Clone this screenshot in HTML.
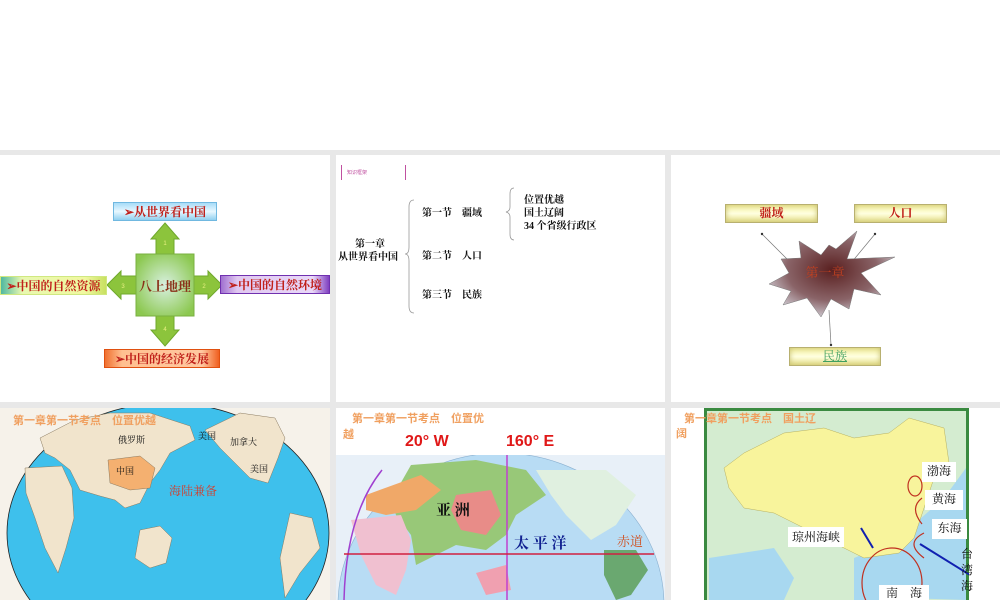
<!DOCTYPE html>
<html><head><meta charset="utf-8">
<style>
*{margin:0;padding:0;box-sizing:border-box}
html,body{width:1000px;height:600px;overflow:hidden}
body{background:#fff;position:relative;font-family:"Liberation Sans","Noto Sans CJK SC",sans-serif}
.a{position:absolute}
.g{position:absolute;background:#e8e8e8}
.lbl{position:absolute;font-family:"Liberation Serif","Noto Serif CJK SC",serif;font-weight:bold;font-size:12px;color:#c0201a;text-align:center;white-space:nowrap;line-height:1}
.t{position:absolute;font-family:"Liberation Serif","Noto Serif CJK SC",serif;font-size:10px;color:#111;white-space:nowrap;line-height:1;font-weight:bold}
.ybox{position:absolute;height:19px;border:1px solid #b8b070;background:linear-gradient(#f4f0a0,#ffffe0 50%,#e8e290);box-shadow:inset 0 0 6px #c8c070}
.og{position:absolute;color:#f0a060;font-size:11px;font-weight:bold;white-space:nowrap;line-height:1;font-family:"Liberation Sans","Noto Sans CJK SC",sans-serif}
</style></head><body>
<div class="g" style="left:0;top:150px;width:1000px;height:5px"></div>
<div class="g" style="left:0;top:402px;width:1000px;height:6px"></div>
<div class="g" style="left:330px;top:150px;width:6px;height:450px"></div>
<div class="g" style="left:665px;top:150px;width:6px;height:450px"></div>

<!-- Panel 1 -->
<svg class="a" style="left:0;top:155px" width="330" height="247">
<defs><radialGradient id="cg" cx="0.5" cy="0.5" r="0.6"><stop offset="0" stop-color="#d8f0e0"/><stop offset="1" stop-color="#8cc850"/></radialGradient></defs>
<g fill="#8cc43c" stroke="#6fa82c" stroke-width="1">
<polygon points="165,68 179,84 174,84 174,99 156,99 156,84 151,84"/>
<polygon points="165,191 179,175 174,175 174,161 156,161 156,175 151,175"/>
<polygon points="107,130 121,116 121,121 136,121 136,139 121,139 121,144"/>
<polygon points="222,130 208,116 208,121 194,121 194,139 208,139 208,144"/>
</g>
<rect x="136" y="99" width="58" height="62" fill="url(#cg)" stroke="#7ab040"/>
<text x="165" y="90" font-size="6" fill="#e8f080" text-anchor="middle">1</text>
<text x="204" y="133" font-size="6" fill="#e8f080" text-anchor="middle">2</text>
<text x="123" y="133" font-size="6" fill="#e8f080" text-anchor="middle">3</text>
<text x="165" y="176" font-size="6" fill="#e8f080" text-anchor="middle">4</text>
</svg>
<div class="lbl" style="left:136px;top:280px;width:58px;font-size:13px;color:#8a3018">八上地理</div>
<div class="lbl" style="left:113px;top:202px;width:104px;height:19px;padding-top:3px;background:linear-gradient(#a8dcf8,#e8f8ff 50%,#90d0f0);border:1px solid #70b8e0">➢从世界看中国</div>
<div class="lbl" style="left:0;top:276px;width:107px;height:19px;padding-top:3px;background:linear-gradient(90deg,#50b8a0,#e8f8b0 20%,#f0f8a0 80%,#c8e060);border:1px solid #d0e880">➢中国的自然资源</div>
<div class="lbl" style="left:220px;top:275px;width:110px;height:19px;padding-top:3px;background:linear-gradient(90deg,#a070d0,#e0c8f0 15%,#e8d8f8 85%,#8040c0);border:1px solid #7030b0">➢中国的自然环境</div>
<div class="lbl" style="left:104px;top:349px;width:116px;height:19px;padding-top:3px;background:linear-gradient(90deg,#f07030,#ffc090 15%,#ffc8a0 85%,#f06020);border:1px solid #e05010">➢中国的经济发展</div>

<!-- Panel 2 -->
<div class="a" style="left:341px;top:165px;width:1px;height:15px;background:#c050a0"></div>
<div class="a" style="left:405px;top:165px;width:1px;height:15px;background:#c050a0"></div>
<div class="a" style="left:347px;top:169px;font-size:5px;color:#c050a0">知识框架</div>
<div class="t" style="left:355px;top:240px">第一章</div>
<div class="t" style="left:338px;top:253px">从世界看中国</div>
<svg class="a" style="left:400px;top:185px" width="120" height="130" fill="none" stroke="#999" stroke-width="0.8">
<path d="M14,15 Q9,15 9,22 L9,62 Q9,69 5,69 Q9,69 9,76 L9,121 Q9,128 14,128"/>
<path d="M114,3 Q110,3 110,9 L110,22 Q110,26 106,27 Q110,28 110,32 L110,49 Q110,55 114,55"/>
</svg>
<div class="t" style="left:422px;top:209px">第一节　疆域</div>
<div class="t" style="left:422px;top:252px">第二节　人口</div>
<div class="t" style="left:422px;top:291px">第三节　民族</div>
<div class="t" style="left:524px;top:196px">位置优越</div>
<div class="t" style="left:524px;top:209px">国土辽阔</div>
<div class="t" style="left:524px;top:222px">34 个省级行政区</div>

<!-- Panel 3 -->
<svg class="a" style="left:671px;top:155px" width="329" height="247">
<defs><radialGradient id="sg" cx="0.5" cy="0.45" r="0.6"><stop offset="0" stop-color="#5a2020"/><stop offset="0.6" stop-color="#8a6468"/><stop offset="1" stop-color="#d8d8e0"/></radialGradient></defs>
<g stroke="#777" stroke-width="0.7">
<line x1="91" y1="79" x2="122" y2="110"/><line x1="204" y1="79" x2="180" y2="108"/><line x1="158" y1="155" x2="160" y2="190"/></g>
<circle cx="91" cy="79" r="1.2" fill="#333"/><circle cx="204" cy="79" r="1.2" fill="#333"/><circle cx="160" cy="190" r="1.2" fill="#333"/>
<polygon fill="url(#sg)" stroke="#777" stroke-width="0.5" points="186,76 176,104 224,102 190,118 210,140 183,134 178,154 160,144 150,162 136,143 112,150 120,136 98,129 118,118 110,104 130,103 128,86 150,100 158,90 165,94"/>
</svg>
<div class="lbl" style="left:770px;top:266px;width:110px;font-size:13px;color:#c04020;font-weight:normal">第一章</div>
<div class="ybox" style="left:725px;top:204px;width:93px"></div>
<div class="lbl" style="left:725px;top:207px;width:93px">疆域</div>
<div class="ybox" style="left:854px;top:204px;width:93px"></div>
<div class="lbl" style="left:854px;top:207px;width:93px">人口</div>
<div class="ybox" style="left:789px;top:347px;width:92px"></div>
<div class="lbl" style="left:789px;top:350px;width:92px;color:#40a060;font-weight:normal;text-decoration:underline">民族</div>

<!-- Bottom Panel 1 -->
<svg class="a" style="left:0;top:408px" width="330" height="192">
<rect width="330" height="192" fill="#f6f2ea"/>
<ellipse cx="168" cy="125" rx="161" ry="130" fill="#3ec0ec" stroke="#222" stroke-width="0.8"/>
<g fill="#f1e4cc" stroke="#8a7a60" stroke-width="0.5">
<path d="M40,30 L75,12 L110,5 L150,5 L190,18 L195,32 L170,45 L160,62 L150,75 L140,95 L125,100 L115,92 L100,88 L80,82 L70,62 L55,50 L45,45 Z"/>
<path d="M25,60 L62,58 L72,80 L74,110 L66,140 L58,165 L45,140 L35,110 L26,85 Z"/>
<path d="M140,122 L160,118 L172,130 L166,155 L150,160 L135,150 Z"/>
<path d="M205,22 L240,5 L275,10 L285,30 L278,50 L268,75 L250,70 L235,55 L220,40 Z"/>
<path d="M290,105 L312,110 L320,140 L300,165 L285,190 L280,150 Z"/>
</g>
<path d="M108,52 L140,48 L155,60 L150,80 L130,82 L110,75 Z" fill="#f4b070" stroke="#8a7a60" stroke-width="0.5"/>
</svg>
<div class="og" style="left:13px;top:416px">第一章第一节考点　位置优越</div>
<div class="t" style="left:118px;top:436px;font-size:9px;font-weight:normal">俄罗斯</div>
<div class="t" style="left:116px;top:467px;font-size:9px;font-weight:normal">中国</div>
<div class="t" style="left:230px;top:438px;font-size:9px;font-weight:normal">加拿大</div>
<div class="t" style="left:250px;top:465px;font-size:9px;font-weight:normal">美国</div>
<div class="t" style="left:198px;top:432px;font-size:9px;font-weight:normal">美国</div>
<div class="lbl" style="left:169px;top:485px;color:#d04030;font-weight:normal">海陆兼备</div>

<!-- Bottom Panel 2 -->
<svg class="a" style="left:336px;top:455px" width="329" height="145">
<rect width="329" height="145" fill="#e8f0f8"/>
<ellipse cx="165" cy="150" rx="163" ry="152" fill="#b8dcf4" stroke="#8ab0d0" stroke-width="0.6"/>
<path d="M75,10 L140,5 L190,15 L210,40 L180,60 L170,80 L150,95 L120,90 L100,100 L80,110 L75,80 L60,60 L55,45 Z" fill="#98c878"/>
<path d="M30,40 L85,20 L105,35 L80,55 L50,60 L30,55 Z" fill="#f0a868"/>
<path d="M120,40 L155,35 L165,60 L150,80 L125,75 L115,55 Z" fill="#e88c88"/>
<path d="M15,65 L65,60 L75,85 L70,115 L60,140 L40,130 L25,100 Z" fill="#f0c0d0"/>
<path d="M140,118 L170,110 L175,135 L150,140 Z" fill="#f0a0b0"/>
<path d="M200,15 L270,15 L300,40 L280,70 L255,85 L230,60 L215,40 Z" fill="#e0f0e0"/>
<path d="M268,95 L300,95 L312,115 L295,140 L280,145 L268,120 Z" fill="#6aa870"/>
<path d="M46,15 Q10,60 8,145" stroke="#a040d0" stroke-width="1.5" fill="none"/>
<line x1="171" y1="0" x2="171" y2="145" stroke="#c040d0" stroke-width="1.5"/>
<line x1="8" y1="99" x2="318" y2="99" stroke="#d02040" stroke-width="1.5"/>
</svg>
<div class="og" style="left:352px;top:414px">第一章第一节考点　位置优</div>
<div class="og" style="left:343px;top:430px">越</div>
<div class="a" style="left:405px;top:433px;color:#e01818;font-size:16px;font-weight:bold">20°  W</div>
<div class="a" style="left:506px;top:433px;color:#e01818;font-size:16px;font-weight:bold">160°  E</div>
<div class="lbl" style="left:436px;top:504px;color:#111;font-size:15px">亚 洲</div>
<div class="lbl" style="left:514px;top:537px;color:#102090;font-size:15px">太 平 洋</div>
<div class="lbl" style="left:617px;top:535px;color:#d05020;font-size:13px;font-weight:normal">赤道</div>

<!-- Bottom Panel 3 -->
<svg class="a" style="left:704px;top:408px" width="265" height="192">
<rect x="0" y="0" width="265" height="192" fill="#3a8a40"/>
<rect x="3" y="3" width="259" height="189" fill="#d4ecd0"/>
<path d="M200,190 L200,125 L240,90 L262,60 L262,192 Z" fill="#a8d8f0"/>
<path d="M5,150 L70,140 L90,170 L80,192 L5,192 Z" fill="#a8d8f0"/>
<path d="M150,150 L200,130 L210,192 L150,192 Z" fill="#a8d8f0"/>
<path d="M40,45 L80,25 L120,20 L150,30 L185,25 L205,10 L240,20 L245,55 L230,70 L220,100 L210,130 L195,145 L160,150 L130,135 L100,120 L70,105 L40,100 L25,80 L20,60 Z" fill="#f8f49c" stroke="#b8b060" stroke-width="0.5"/>
<g fill="none" stroke="#c03020" stroke-width="1.2">
<ellipse cx="211" cy="78" rx="7" ry="10"/><path d="M218,90 Q205,100 218,116"/><path d="M220,125 Q200,135 220,150"/>
<ellipse cx="188" cy="175" rx="30" ry="35"/></g>
<g stroke="#1020b0" stroke-width="2" fill="none"><line x1="157" y1="120" x2="169" y2="140"/><line x1="266" y1="167" x2="216" y2="136"/></g>
</svg>
<div class="og" style="left:684px;top:414px">第一章第一节考点　国土辽</div>
<div class="og" style="left:676px;top:429px">阔</div>
<div class="lbl" style="left:922px;top:462px;width:34px;height:20px;padding-top:3px;background:#fff;color:#111;font-weight:normal">渤海</div>
<div class="lbl" style="left:925px;top:490px;width:38px;height:20px;padding-top:3px;background:#fff;color:#111;font-weight:normal">黄海</div>
<div class="lbl" style="left:932px;top:519px;width:35px;height:20px;padding-top:3px;background:#fff;color:#111;font-weight:normal">东海</div>
<div class="lbl" style="left:788px;top:527px;width:56px;height:20px;padding-top:4px;background:#fff;color:#111;font-weight:normal">琼州海峡</div>
<div class="lbl" style="left:879px;top:585px;width:50px;height:15px;padding-top:2px;background:#fff;color:#111;font-weight:normal">南　海</div>
<div class="a" style="left:961px;top:546px;width:18px;height:54px;overflow:hidden;font-family:'Liberation Serif','Noto Serif CJK SC',serif;font-size:12px;line-height:16px;color:#111">台<br>湾<br>海</div>
</body></html>
